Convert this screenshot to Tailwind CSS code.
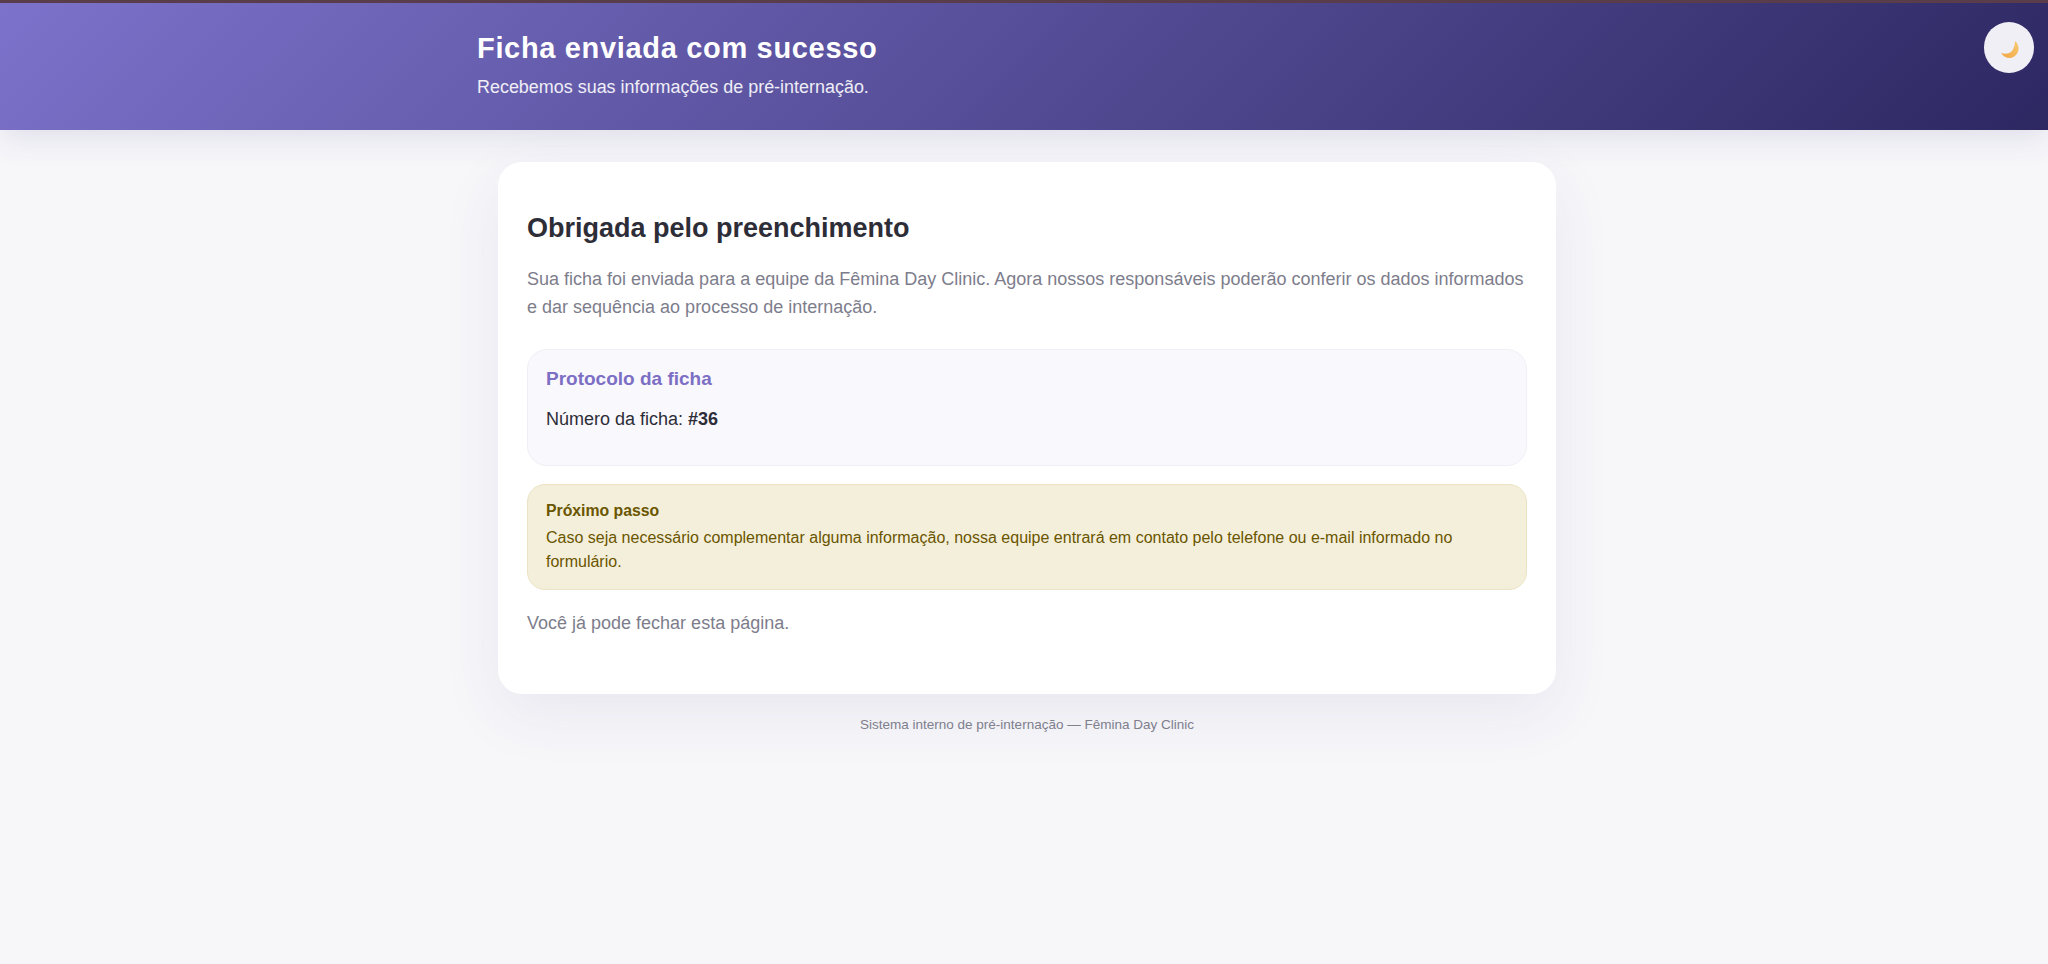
<!DOCTYPE html>
<html lang="pt-BR">
	<head>
		<meta charset="UTF-8" />
		<title>Ficha enviada com sucesso</title>
		<script src="https://cdn.jsdelivr.net/npm/@tailwindcss/browser@4"></script>
	</head>
	<body class="min-h-[964px] bg-[#f7f7fa] font-['Liberation_Sans',Arial,sans-serif]">
		<header class="relative h-[130px] border-t-[3px] border-[#5a3d4a] bg-[linear-gradient(135deg,#7c72cb,#2d2862)] pl-[477px] shadow-[0_8px_30px_rgba(60,50,120,0.12)]">
			<h1 class="pt-[26px] text-[29px] leading-[38px] font-bold tracking-[0.67px] text-white">Ficha enviada com sucesso</h1>
			<p class="mt-[8px] text-[17.94px] leading-[24px] text-white/90">Recebemos suas informações de pré-internação.</p>
			<button type="button" class="absolute top-[19px] right-[14px] flex h-[51px] w-[50px] items-center justify-center rounded-full bg-[#f0eff5]">
				<svg class="mt-[4px] ml-[2px] size-[18px]" viewBox="0 0 18 18" aria-hidden="true">
					<defs>
						<linearGradient id="moon" x1="0" y1="1" x2="1" y2="0">
							<stop offset="0" stop-color="#f2a441" />
							<stop offset="1" stop-color="#f8cb72" />
						</linearGradient>
					</defs>
					<path fill="url(#moon)" d="M14 0C18 3 19 10 15 14C11 18.500 4 18 0 12Q6 14 10 11Q14 7 14 0z" />
				</svg>
			</button>
		</header>

		<main class="relative ml-[498px] mt-[32px] h-[532px] w-[1058px] rounded-[24px] bg-white px-[29px] pt-[47px] shadow-[0_20px_60px_rgba(60,50,120,0.08)]">
			<h2 class="text-[27px] leading-[38px] font-bold text-[#2d2d38]">Obrigada pelo preenchimento</h2>
			<p class="mt-[18px] text-[18px] leading-[28px] text-[#7d7d8c]">Sua ficha foi enviada para a equipe da Fêmina Day Clinic. Agora nossos responsáveis poderão conferir os dados informados e dar sequência ao processo de internação.</p>
			<section class="mt-[28px] h-[117px] rounded-[20px] border border-[#efeff6] bg-[#f9f9fd] px-[18px] pt-[16px]">
				<h3 class="text-[19px] leading-[26px] font-bold text-[#7c6fc4]">Protocolo da ficha</h3>
				<p class="mt-[14px] text-[18px] leading-[26px] text-[#2d2d38]">Número da ficha: <strong class="font-bold">#36</strong></p>
			</section>
			<section class="mt-[18px] h-[106px] rounded-[18px] border border-[#ebe3c3] bg-[#f4efda] px-[18px] pt-[14px] text-[#6a5500]">
				<h4 class="text-[15.8px] leading-[24px] font-bold">Próximo passo</h4>
				<p class="mt-[2.5px] text-[16px] leading-[24.5px]">Caso seja necessário complementar alguma informação, nossa equipe entrará em contato pelo telefone ou e-mail informado no formulário.</p>
			</section>
			<p class="mt-[19px] text-[18px] leading-[28px] text-[#7d7d8c]">Você já pode fechar esta página.</p>
		</main>

		<footer class="ml-[498px] w-[1058px] pt-[22px] text-center text-[13.5px] leading-[18px] text-[#82828f]">Sistema interno de pré-internação — Fêmina Day Clinic</footer>
	</body>
</html>
